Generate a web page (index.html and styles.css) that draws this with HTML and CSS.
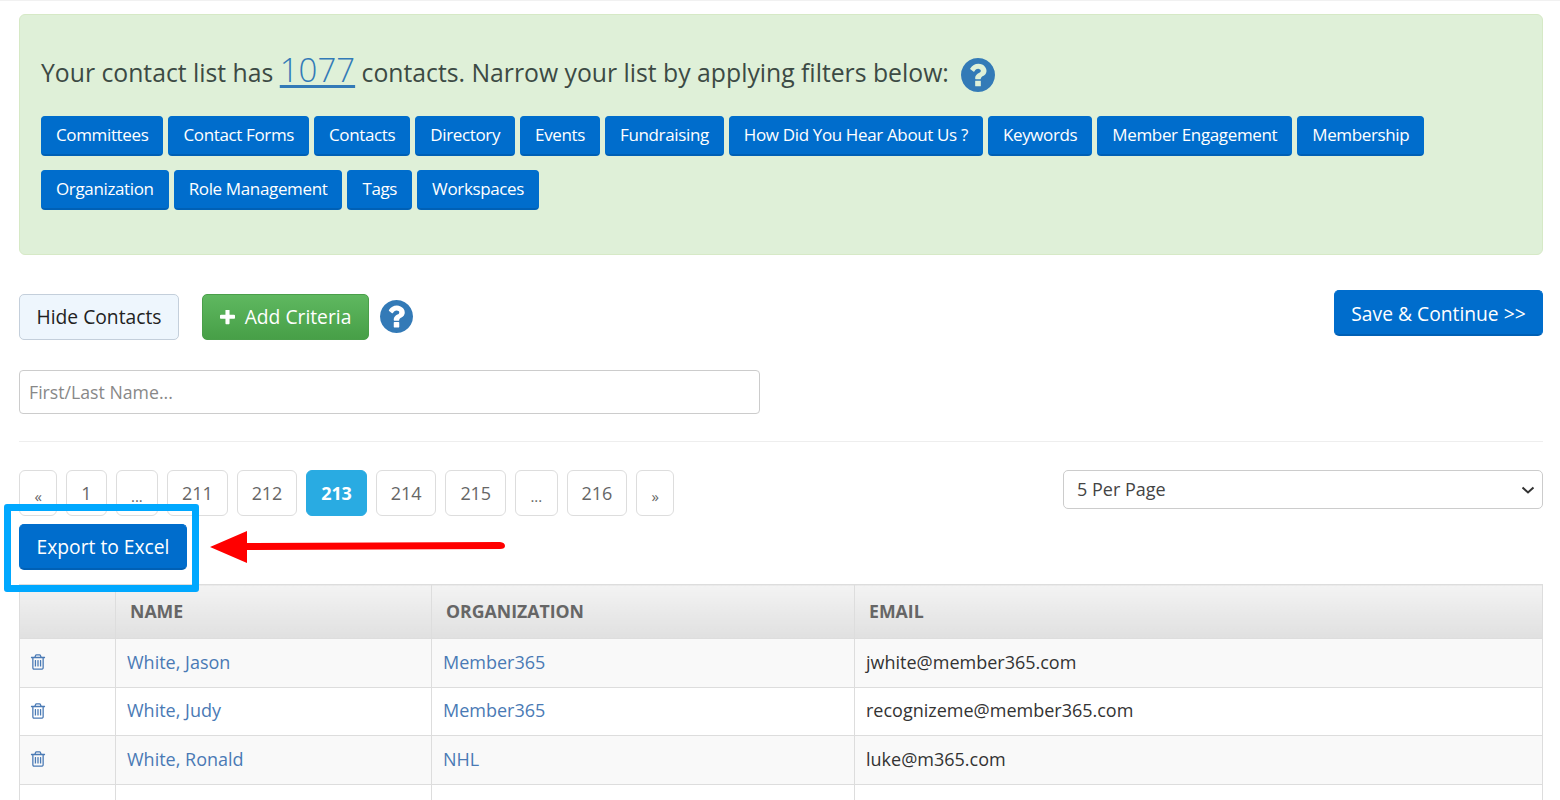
FILE: index.html
```html
<!DOCTYPE html>
<html lang="en">
<head>
    <meta charset="UTF-8">
    <title>Contact List</title>
    <link rel="stylesheet" href="styles.css">
</head>
<body>
    <div class="page">
        <!-- filter panel -->
        <div class="panel">
            <h2 class="panel-title">
                Your contact list has <a href="#" class="count">1077</a> contacts. Narrow your list by applying filters below:
                <svg class="help help-title" viewBox="0 0 100 100"><use href="#icon-help"></use></svg>
            </h2>
            <div class="filters">
                <button class="btn btn-blue">Committees</button>
                <button class="btn btn-blue">Contact Forms</button>
                <button class="btn btn-blue">Contacts</button>
                <button class="btn btn-blue">Directory</button>
                <button class="btn btn-blue">Events</button>
                <button class="btn btn-blue">Fundraising</button>
                <button class="btn btn-blue">How Did You Hear About Us ?</button>
                <button class="btn btn-blue">Keywords</button>
                <button class="btn btn-blue">Member Engagement</button>
                <button class="btn btn-blue">Membership</button>
                <button class="btn btn-blue">Organization</button>
                <button class="btn btn-blue">Role Management</button>
                <button class="btn btn-blue">Tags</button>
                <button class="btn btn-blue">Workspaces</button>
            </div>
        </div>

        <!-- actions -->
        <div class="actions">
            <button class="action action-light">Hide Contacts</button>
            <button class="action action-green">
                <svg class="plus" viewBox="192 192 1408 1408"><path d="M1600 736v192q0 40-28 68t-68 28h-416v416q0 40-28 68t-68 28h-192q-40 0-68-28t-28-68v-416h-416q-40 0-68-28t-28-68v-192q0-40 28-68t68-28h416v-416q0-40 28-68t68-28h192q40 0 68 28t28 68v416h416q40 0 68 28t28 68z"/></svg>
                Add Criteria
            </button>
            <svg class="help help-action" viewBox="0 0 100 100"><use href="#icon-help"></use></svg>
            <button class="action action-blue save">Save &amp; Continue &gt;&gt;</button>
        </div>

        <input type="text" class="search" placeholder="First/Last Name...">
        <hr class="divider">

        <!-- pagination -->
        <div class="pager-row">
            <div class="pager">
                <a href="#" class="page-link small">«</a>
                <a href="#" class="page-link">1</a>
                <a href="#" class="page-link small">...</a>
                <a href="#" class="page-link">211</a>
                <a href="#" class="page-link">212</a>
                <a href="#" class="page-link active">213</a>
                <a href="#" class="page-link">214</a>
                <a href="#" class="page-link">215</a>
                <a href="#" class="page-link small">...</a>
                <a href="#" class="page-link">216</a>
                <a href="#" class="page-link small">»</a>
            </div>
            <select class="per-page">
                <option>5 Per Page</option>
            </select>
        </div>

        <button class="action action-blue export">Export to Excel</button>

        <!-- contacts -->
        <table class="contacts">
            <thead>
                <tr>
                    <th class="col-icon"></th>
                    <th class="col-name">Name</th>
                    <th class="col-org">Organization</th>
                    <th>Email</th>
                </tr>
            </thead>
            <tbody>
                <tr>
                    <td><svg class="trash" viewBox="0 0 1792 1792"><use href="#icon-trash"></use></svg></td>
                    <td><a href="#">White, Jason</a></td>
                    <td><a href="#">Member365</a></td>
                    <td>jwhite@member365.com</td>
                </tr>
                <tr>
                    <td><svg class="trash" viewBox="0 0 1792 1792"><use href="#icon-trash"></use></svg></td>
                    <td><a href="#">White, Judy</a></td>
                    <td><a href="#">Member365</a></td>
                    <td>recognizeme@member365.com</td>
                </tr>
                <tr>
                    <td><svg class="trash" viewBox="0 0 1792 1792"><use href="#icon-trash"></use></svg></td>
                    <td><a href="#">White, Ronald</a></td>
                    <td><a href="#">NHL</a></td>
                    <td>luke@m365.com</td>
                </tr>
                <tr>
                    <td>&nbsp;</td>
                    <td>&nbsp;</td>
                    <td>&nbsp;</td>
                    <td>&nbsp;</td>
                </tr>
            </tbody>
        </table>
    </div>

    <!-- annotation drawn over the screenshot -->
    <div class="highlight"></div>
    <svg class="arrow" width="300" height="40" viewBox="0 0 300 40">
        <path d="M0 19 L37 3 L37 15 L290 14 Q295 14.500 295 18 Q295 21 290 21 L37 22 L37 35 Z"/>
    </svg>

    <!-- icon defs -->
    <svg class="defs" width="0" height="0">
        <symbol id="icon-help" viewBox="128 128 1536 1536">
            <path d="M1024 1376v-192q0-14-9-23t-23-9h-192q-14 0-23 9t-9 23v192q0 14 9 23t23 9h192q14 0 23-9t9-23zm256-672q0-88-55.500-163t-138.500-116-170-41q-243 0-371 213-15 24 8 42l132 100q7 6 19 6 16 0 25-12 53-68 86-92 34-24 86-24 48 0 85.500 26t37.500 59q0 38-20 61t-68 45q-63 28-115.500 86.500t-52.500 125.500v36q0 14 9 23t23 9h192q14 0 23-9t9-23q0-19 21.500-49.500t54.500-49.500q32-18 49-28.500t46-35 44.500-48 28-60.500 12.500-81zm384 192q0 209-103 385.500t-279.500 279.500-385.500 103-385.500-103-279.500-279.500-103-385.500 103-385.500 279.500-279.500 385.500-103 385.500 103 279.500 279.500 103 385.500z"/>
        </symbol>
        <symbol id="icon-trash" viewBox="0 0 1792 1792">
            <path d="M704 736v576q0 14-9 23t-23 9h-64q-14 0-23-9t-9-23v-576q0-14 9-23t23-9h64q14 0 23 9t9 23zm256 0v576q0 14-9 23t-23 9h-64q-14 0-23-9t-9-23v-576q0-14 9-23t23-9h64q14 0 23 9t9 23zm256 0v576q0 14-9 23t-23 9h-64q-14 0-23-9t-9-23v-576q0-14 9-23t23-9h64q14 0 23 9t9 23zm128 724v-948h-896v948q0 22 7 40.500t14.500 27 10.500 8.500h832q3 0 10.500-8.500t14.500-27 7-40.500zm-672-1076h448l-48-117q-7-9-17-11h-317q-10 2-17 11zm928 32v64q0 14-9 23t-23 9h-96v948q0 83-47 143.500t-113 60.500h-832q-66 0-113-58.500t-47-141.500v-952h-96q-14 0-23-9t-9-23v-64q0-14 9-23t23-9h309l70-167q15-37 54-63t79-26h320q40 0 79 26t54 63l70 167h309q14 0 23 9t9 23z"/>
        </symbol>
    </svg>
</body>
</html>
```

FILE: styles.css
```css
html, body {
    height: 800px;
    overflow: hidden;
}
body {
    font-family: "Open Sans", "Liberation Sans", sans-serif;
    font-size: 18px;
    color: #333;
    background-color: #fff;
    margin: 0;
    position: relative;
}
.page {
    box-sizing: border-box;
    width: 1560px;
    height: 800px;
    padding: 14px 17px 0 19px;
    border-top: 1px solid #f1f1f1;
}
.panel {
    box-sizing: border-box;
    height: 241px;
    margin-top: -1px;
    padding: 32px 21px 0 21px;
    background-color: #dff0d8;
    border: 1px solid #d6e9c6;
    border-radius: 6px;
}
.panel-title {
    height: 46px;
    margin: 0 0 23px 0;
    font-size: 24.750px;
    line-height: 46px;
    font-weight: 400;
    color: #3c4a44;
    white-space: nowrap;
}
.count {
    font-size: 33px;
    font-weight: 300;
    color: #337ab7;
    text-decoration: underline;
    text-underline-offset: 3px;
}
.help {
    fill: #337ab7;
    flex: none;
}
.help-title {
    width: 34px;
    height: 34px;
    margin-left: 6px;
    vertical-align: -10px;
}
.filters {
    display: flex;
    flex-wrap: wrap;
    gap: 14px 5px;
    width: 1420px;
}
.btn {
    height: 40px;
    padding: 0 14px 2px 14px;
    font-family: inherit;
    font-size: 17px;
    letter-spacing: -0.360px;
    border-radius: 4px;
    cursor: pointer;
}
.btn-blue, .action-blue {
    color: #fff;
    background-color: #006dcc;
    border: 1px solid #006dcc;
    border-bottom: 2px solid #0060b5;
}
.actions {
    display: flex;
    align-items: center;
    height: 46px;
    margin-top: 39px;
}
.action {
    height: 46px;
    font-family: inherit;
    font-size: 19.250px;
    border-radius: 5px;
    cursor: pointer;
}
.action-light {
    width: 160px;
    padding-bottom: 3px;
    color: #222;
    background-color: #eef6fd;
    border: 1px solid #c4cfdb;
}
.action-green {
    width: 167px;
    margin-left: 23px;
    margin-right: 11px;
    padding-bottom: 3px;
    color: #fff;
    background: linear-gradient(#5fb860, #479f47);
    border: 1px solid #4a9f4a;
}
.plus {
    width: 15px;
    height: 15px;
    fill: #fff;
    vertical-align: -1px;
    margin-right: 5px;
}
.help-action {
    width: 33px;
    height: 33px;
    margin-top: -2px;
}
.save {
    width: 209px;
    height: 46px;
    margin-left: auto;
    align-self: flex-start;
    margin-top: -4px;
    padding-top: 2px;
}
.search {
    display: block;
    box-sizing: border-box;
    width: 741px;
    height: 44px;
    margin-top: 30px;
    padding: 0 9px;
    font-family: inherit;
    font-size: 17.700px;
    color: #555;
    border: 1px solid #ccc;
    border-radius: 4px;
}
.search::placeholder {
    color: #888;
    opacity: 1;
}
.divider {
    height: 1px;
    margin: 27px 0 28px 0;
    border: 0;
    background-color: #eee;
}
.pager-row {
    display: flex;
    justify-content: space-between;
    align-items: flex-start;
    height: 46px;
}
.pager {
    display: flex;
    gap: 9px;
}
.page-link {
    box-sizing: border-box;
    display: block;
    height: 46px;
    line-height: 44px;
    padding: 0 14px;
    font-size: 18px;
    letter-spacing: -0.100px;
    color: #666;
    text-decoration: none;
    border: 1px solid #ddd;
    border-radius: 6px;
}
.page-link.small {
    padding: 0 14.500px;
    font-size: 15px;
    line-height: 50px;
}
.page-link.active {
    color: #fff;
    font-weight: 700;
    background-color: #29abe2;
    border-color: #29abe2;
}
.per-page {
    box-sizing: border-box;
    width: 480px;
    height: 39px;
    padding: 0 9px 2px 13px;
    font-family: inherit;
    font-size: 18px;
    color: #444;
    appearance: none;
    background: #fff url("data:image/svg+xml,%3Csvg xmlns='http://www.w3.org/2000/svg' width='14' height='8'%3E%3Cpath d='M1.500 1.500 L7 6.500 L12.500 1.500' fill='none' stroke='%23333' stroke-width='2'/%3E%3C/svg%3E") no-repeat right 7px center;
    border: 1px solid #ccc;
    border-radius: 5px;
}
.export {
    display: block;
    width: 168px;
    margin-top: 8px;
}
.contacts {
    width: 1524px;
    margin-top: 14px;
    table-layout: fixed;
    border-collapse: collapse;
    font-size: 18px;
}
.contacts th, .contacts td {
    box-sizing: border-box;
}
.col-icon { width: 96px; }
.col-name { width: 316px; }
.col-org { width: 423px; }
.contacts th {
    height: 54px;
    padding: 0 14px 2px 14px;
    text-align: left;
    font-size: 17.700px;
    font-weight: 700;
    color: #666;
    text-transform: uppercase;
    background: linear-gradient(#f3f3f3, #e0e0e0);
    border: 1px solid #ddd;
}
.contacts td {
    height: 48.500px;
    padding: 0 11px 2px 11px;
    color: #333;
    border: 1px solid #ddd;
}
.contacts tbody tr:nth-child(odd) td {
    background-color: #f9f9f9;
}
.contacts tbody tr:last-child td {
    background-color: #fff;
}
.contacts a {
    color: #4a7ab5;
    text-decoration: none;
}
.trash {
    display: block;
    width: 18px;
    height: 18px;
    margin: 1px 0 0 -2px;
    fill: #4a7ab5;
}
.highlight {
    position: absolute;
    left: 4px;
    top: 504px;
    width: 181px;
    height: 74px;
    border: 7px solid #00a8ff;
    border-radius: 3px;
}
.arrow {
    position: absolute;
    left: 210px;
    top: 528px;
    fill: #f00;
}
.defs {
    position: absolute;
}
```
